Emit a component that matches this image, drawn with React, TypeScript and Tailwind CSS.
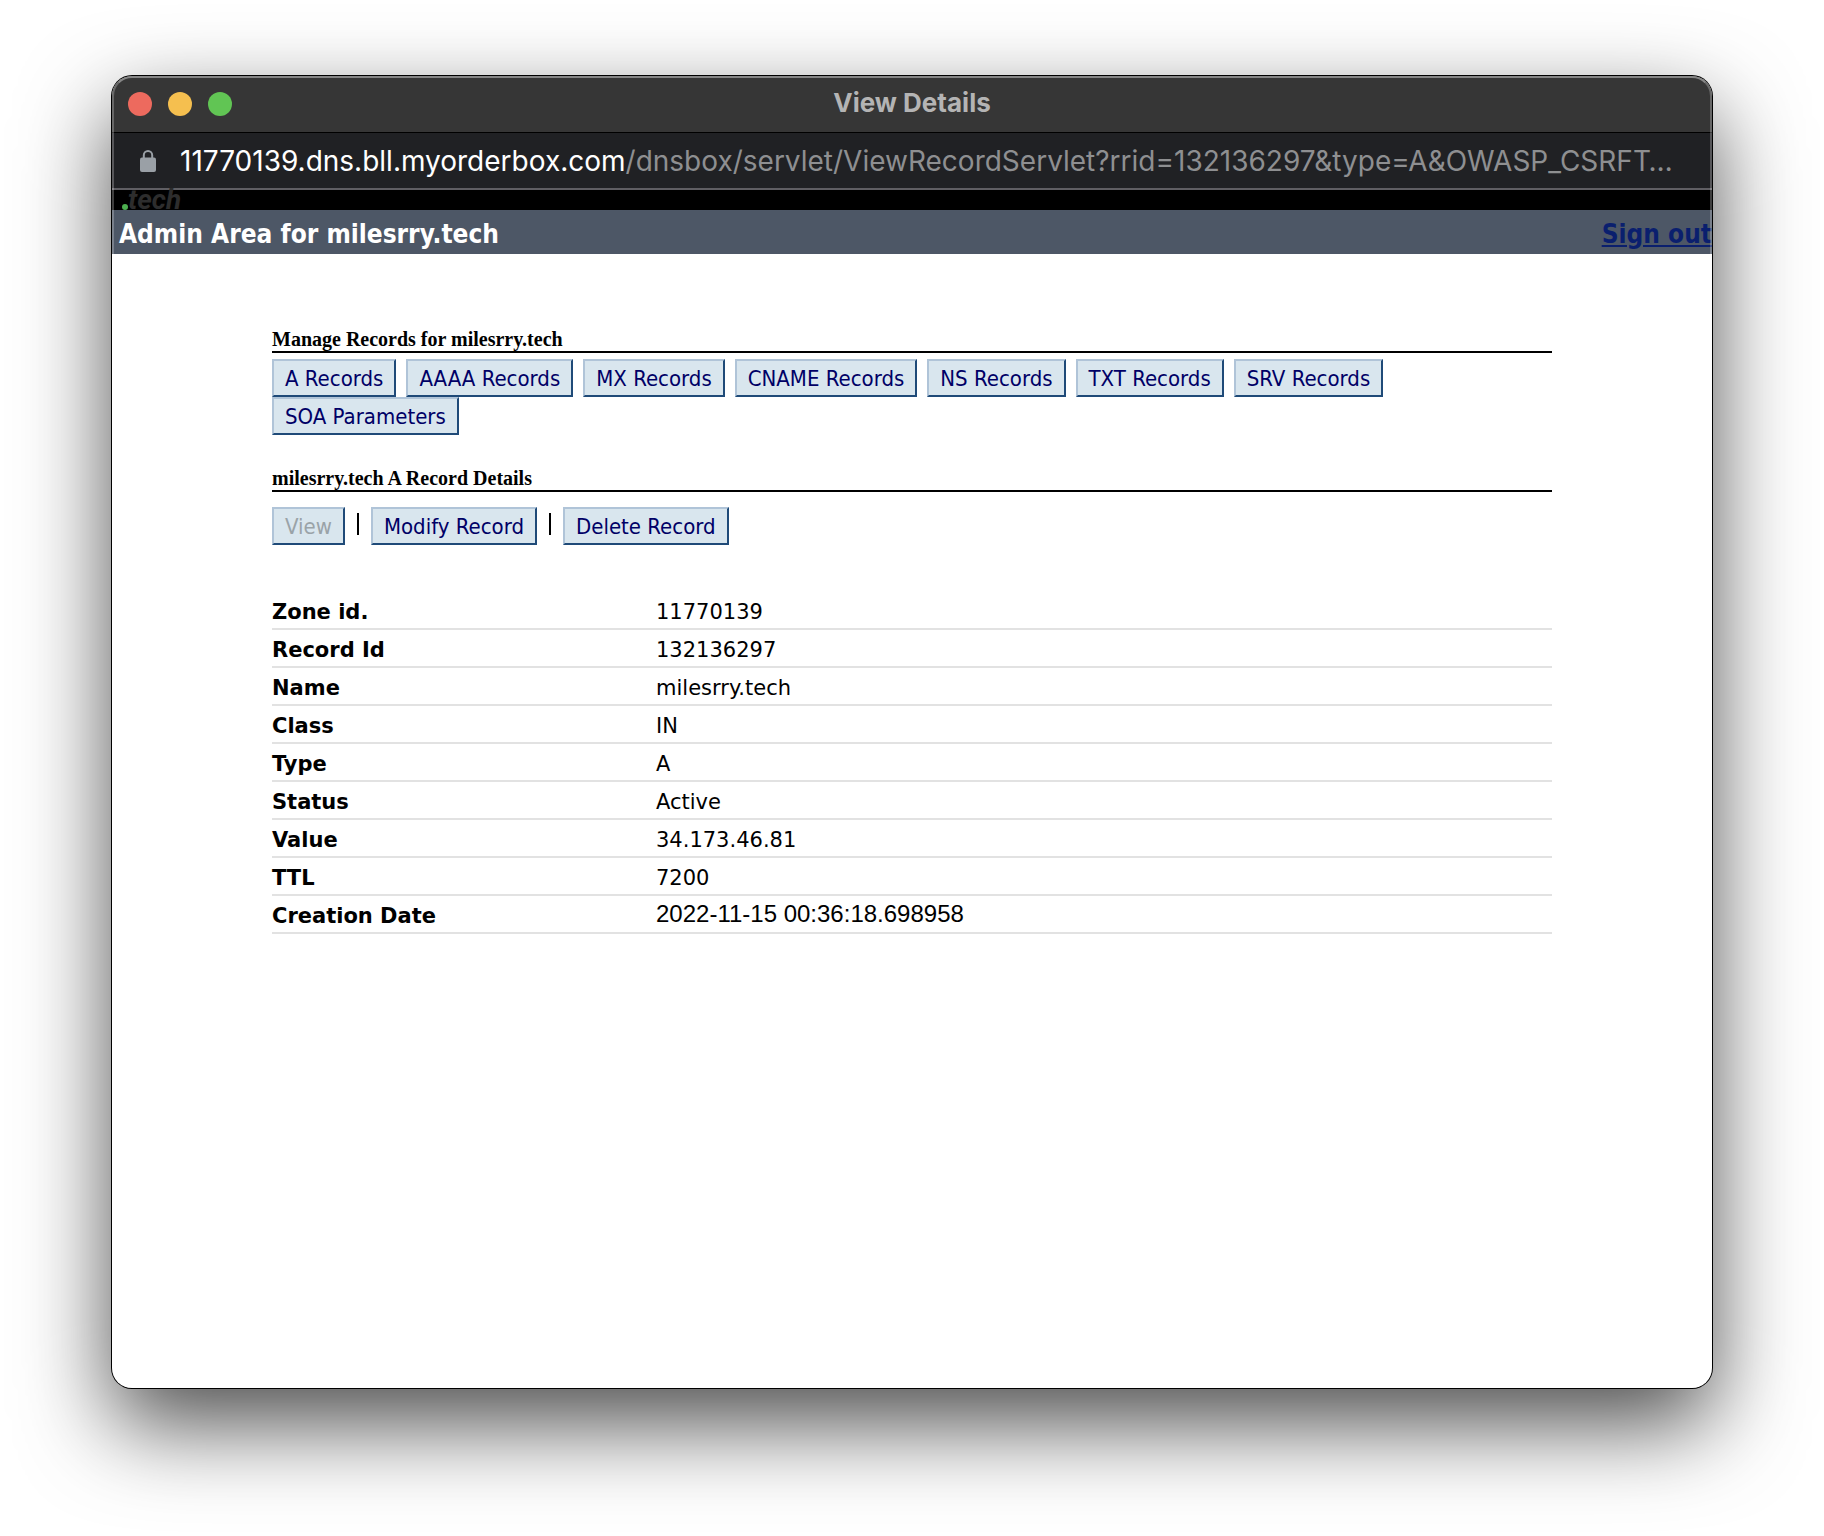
import React from "react";

const recordTabs = [
  "A Records",
  "AAAA Records",
  "MX Records",
  "CNAME Records",
  "NS Records",
  "TXT Records",
  "SRV Records",
  "SOA Parameters",
];

const details = [
  { label: "Zone id.", value: "11770139" },
  { label: "Record Id", value: "132136297" },
  { label: "Name", value: "milesrry.tech" },
  { label: "Class", value: "IN" },
  { label: "Type", value: "A" },
  { label: "Status", value: "Active" },
  { label: "Value", value: "34.173.46.81" },
  { label: "TTL", value: "7200" },
  { label: "Creation Date", value: "2022-11-15 00:36:18.698958", plain: true },
];

function BevelButton({ children, disabled = false }: { children: React.ReactNode; disabled?: boolean }) {
  return (
    <button
      type="button"
      disabled={disabled}
      className="h-[38px] border-2 border-t-[#b0c4d8] border-l-[#b0c4d8] border-r-[#1f4a78] border-b-[#1f4a78] bg-[#d9e6ee] px-[11px] pt-0.5 font-['DejaVu_Sans_Condensed','DejaVu_Sans',sans-serif] text-[22px] leading-8 whitespace-nowrap text-[#000066] disabled:text-[#9aa3a8]"
    >
      {children}
    </button>
  );
}

function SectionTitle({ children }: { children: React.ReactNode }) {
  return (
    <h2 className="border-b-2 border-black font-['Liberation_Serif',serif] text-[20px] leading-6 font-bold text-black">
      {children}
    </h2>
  );
}

function TitleBar() {
  return (
    <header className="grid h-14 grid-cols-[1fr_auto_1fr] items-center bg-[#363636] px-4">
      <div className="flex gap-4">
        <button type="button" aria-label="Close" className="size-6 rounded-full bg-[#ed6a5e]" />
        <button type="button" aria-label="Minimize" className="size-6 rounded-full bg-[#f5bf4f]" />
        <button type="button" aria-label="Zoom" className="size-6 rounded-full bg-[#61c554]" />
      </div>
      <h1 className="pb-0.5 font-['Inter',sans-serif] text-[26px] leading-8 font-bold text-[#b4b4b4]">View Details</h1>
    </header>
  );
}

function AddressBar() {
  return (
    <div className="flex h-[58px] items-center border-t border-b-2 border-t-black border-b-[#5f5e63] bg-[#202124] pr-6 pl-7">
      <svg viewBox="0 0 16 22" className="h-[22px] w-4 shrink-0" aria-hidden="true">
        <rect x="0" y="7.5" width="16" height="14.5" rx="2" fill="#9aa0a6" />
        <path d="M3.8 9V5.2a4.2 4.2 0 0 1 8.4 0V9" fill="none" stroke="#9aa0a6" strokeWidth="2" />
      </svg>
      <p className="ml-6 min-w-0 truncate font-['Inter',sans-serif] text-[28px] leading-9 text-[#8e8f91]">
        <span className="text-white">11770139.dns.bll.myorderbox.com</span>
        /dnsbox/servlet/ViewRecordServlet?rrid=132136297&amp;type=A&amp;OWASP_CSRFT…
      </p>
    </div>
  );
}

export default function App() {
  return (
    <div className="flex min-h-screen flex-col bg-white px-28 pt-19 pb-37">
      <div className="relative flex flex-1 flex-col overflow-hidden rounded-[20px] bg-white shadow-[0_0_0_1px_#000,0_36px_90px_rgba(0,0,0,0.7)]">
        <TitleBar />
        <AddressBar />

        <div className="flex h-5 items-end bg-black px-2.5">
          <svg viewBox="0 0 6 6" className="size-1.5 shrink-0" aria-hidden="true">
            <circle cx="3" cy="3" r="3" fill="#4caf50" />
          </svg>
          <span className="font-['Roboto',sans-serif] text-[28px] leading-5 font-bold text-[#2d2d2d] italic">tech</span>
        </div>

        <div className="flex h-11 items-center justify-between bg-[#4d5766] pt-1 pl-[7px] font-['DejaVu_Sans_Condensed','DejaVu_Sans',sans-serif] text-[26px] leading-8 font-bold whitespace-nowrap">
          <span className="text-white">Admin Area for milesrry.tech</span>
          <a href="#signout" className="text-[#0a1f6e] underline">
            Sign out
          </a>
        </div>

        <main className="mx-auto w-4/5 pt-[73px]">
          <SectionTitle>Manage Records for milesrry.tech</SectionTitle>
          <nav className="flex max-w-[1120px] flex-wrap gap-x-2.5 pt-1.5">
            {recordTabs.map((tab) => (
              <BevelButton key={tab}>{tab}</BevelButton>
            ))}
          </nav>

          <div className="pt-[31px]">
            <SectionTitle>milesrry.tech A Record Details</SectionTitle>
          </div>
          <div className="flex items-center gap-3 pt-[15px] text-black">
            <BevelButton disabled>View</BevelButton>
            <span className="mb-1 h-[22px] w-0.5 bg-black" />
            <BevelButton>Modify Record</BevelButton>
            <span className="mb-1 h-[22px] w-0.5 bg-black" />
            <BevelButton>Delete Record</BevelButton>
          </div>

          <table className="mt-[46px] w-full table-fixed border-collapse text-left text-black">
            <tbody>
              {details.map((row) => (
                <tr key={row.label} className="h-[38px] border-b-2 border-[#e2e2e2]">
                  <th
                    scope="row"
                    className="w-[30%] p-0 pt-1 font-['DejaVu_Sans',sans-serif] text-[21px] leading-8 font-bold"
                  >
                    {row.label}
                  </th>
                  <td
                    className={
                      row.plain
                        ? "p-0 font-['Liberation_Sans',sans-serif] text-[24px] leading-8"
                        : "p-0 pt-1 font-['DejaVu_Sans',sans-serif] text-[21px] leading-8"
                    }
                  >
                    {row.value}
                  </td>
                </tr>
              ))}
            </tbody>
          </table>
        </main>

        <div className="pointer-events-none absolute inset-0 rounded-[20px] border-2 border-white/25 border-t-white/40" />
      </div>
    </div>
  );
}
